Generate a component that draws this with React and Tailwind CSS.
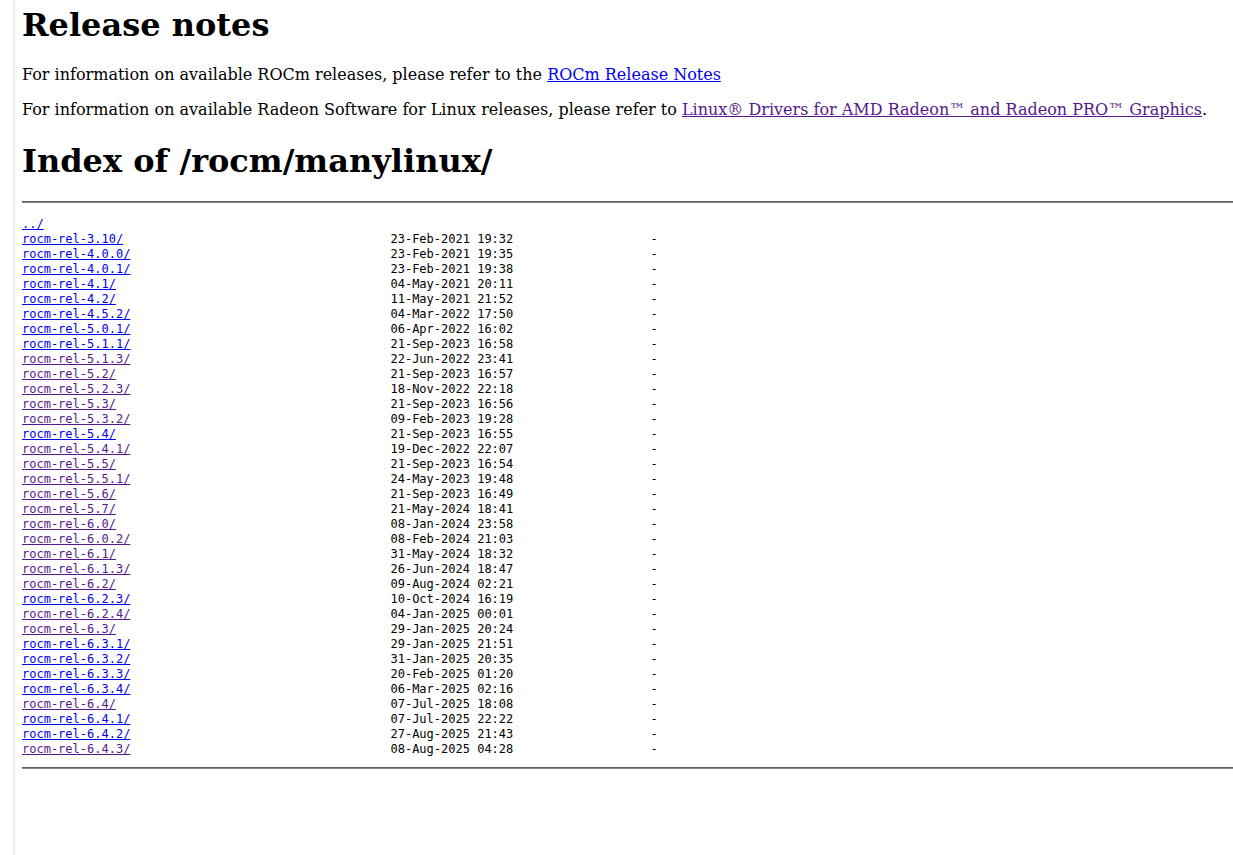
const rows = [
  ["3.10", "23-Feb-2021 19:32", false],
  ["4.0.0", "23-Feb-2021 19:35", false],
  ["4.0.1", "23-Feb-2021 19:38", false],
  ["4.1", "04-May-2021 20:11", false],
  ["4.2", "11-May-2021 21:52", false],
  ["4.5.2", "04-Mar-2022 17:50", false],
  ["5.0.1", "06-Apr-2022 16:02", false],
  ["5.1.1", "21-Sep-2023 16:58", false],
  ["5.1.3", "22-Jun-2022 23:41", true],
  ["5.2", "21-Sep-2023 16:57", true],
  ["5.2.3", "18-Nov-2022 22:18", true],
  ["5.3", "21-Sep-2023 16:56", true],
  ["5.3.2", "09-Feb-2023 19:28", true],
  ["5.4", "21-Sep-2023 16:55", false],
  ["5.4.1", "19-Dec-2022 22:07", true],
  ["5.5", "21-Sep-2023 16:54", true],
  ["5.5.1", "24-May-2023 19:48", true],
  ["5.6", "21-Sep-2023 16:49", true],
  ["5.7", "21-May-2024 18:41", true],
  ["6.0", "08-Jan-2024 23:58", true],
  ["6.0.2", "08-Feb-2024 21:03", true],
  ["6.1", "31-May-2024 18:32", true],
  ["6.1.3", "26-Jun-2024 18:47", true],
  ["6.2", "09-Aug-2024 02:21", true],
  ["6.2.3", "10-Oct-2024 16:19", false],
  ["6.2.4", "04-Jan-2025 00:01", true],
  ["6.3", "29-Jan-2025 20:24", true],
  ["6.3.1", "29-Jan-2025 21:51", false],
  ["6.3.2", "31-Jan-2025 20:35", false],
  ["6.3.3", "20-Feb-2025 01:20", false],
  ["6.3.4", "06-Mar-2025 02:16", false],
  ["6.4", "07-Jul-2025 18:08", true],
  ["6.4.1", "07-Jul-2025 22:22", false],
  ["6.4.2", "27-Aug-2025 21:43", false],
  ["6.4.3", "08-Aug-2025 04:28", true],
];

const serif = "font-['DejaVu_Serif',serif]";

let App = () => {
  return (
    <div className={`min-h-screen flex bg-white text-black leading-[normal] ${serif}`}>
      <div className="w-[13px] shrink-0" />
      <div className="w-[2px] shrink-0 bg-[#ebebeb]" />
      <div className="flex-1 pl-[7px]">
        <h1 className="text-[32px] font-bold mt-[6px] mb-[21px]">Release notes</h1>
        <p className="text-[16px] my-4">
          For information on available ROCm releases, please refer to the{" "}
          <a href="#" className="text-[#0000ee] underline">ROCm Release Notes</a>
        </p>
        <p className="text-[16px] my-4">
          For information on available Radeon Software for Linux releases, please refer to{" "}
          <a href="#" className="text-[#551a8b] underline">Linux® Drivers for AMD Radeon™ and Radeon PRO™ Graphics</a>.
        </p>
        <h1 className="text-[32px] font-bold mt-[23px] mb-[21px]">Index of /rocm/manylinux/</h1>
        <hr className="border-0 border-t border-b border-t-[#5e5e5e] border-b-[#8a8a8a]" />
        <pre className="font-['DejaVu_Sans_Mono',monospace] text-[12px] leading-[15px] mt-[14px] mb-[10px]">
          <a href="#" className="text-[#0000ee] underline">../</a>
          {"\n"}
          {rows.map(([v, date, visited]) => {
            const name = `rocm-rel-${v}/`;
            return (
              <span key={v}>
                <a href="#" className={visited ? "text-[#551a8b] underline" : "text-[#0000ee] underline"}>{name}</a>
                {" ".repeat(51 - name.length)}
                {date}
                {" ".repeat(19)}
                {"-\n"}
              </span>
            );
          })}
        </pre>
        <hr className="border-0 border-t border-b border-t-[#5e5e5e] border-b-[#8a8a8a]" />
      </div>
    </div>
  );
};

export default App
